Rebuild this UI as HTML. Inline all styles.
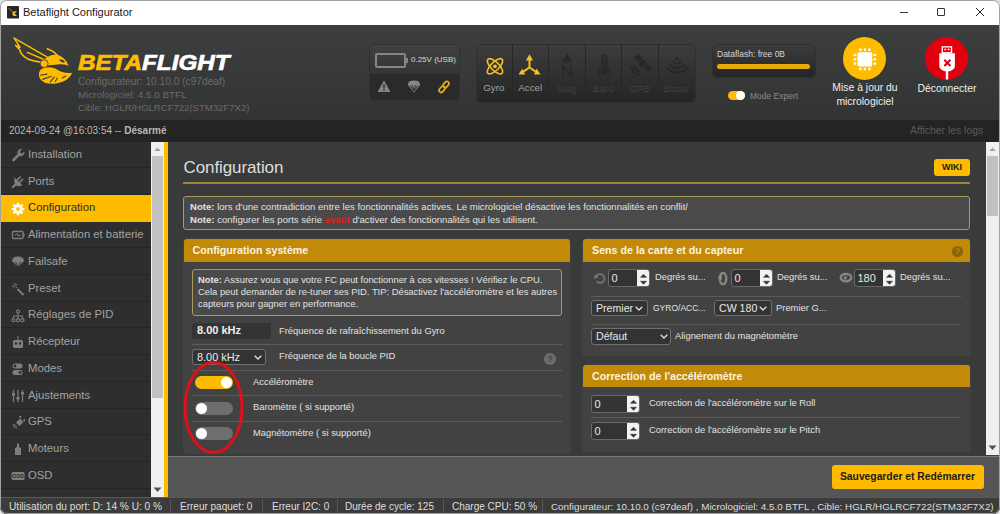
<!DOCTYPE html>
<html><head><meta charset="utf-8">
<style>
*{box-sizing:border-box;margin:0;padding:0}
html,body{width:1000px;height:514px;overflow:hidden;background:#e2e2e2;font-family:"Liberation Sans",sans-serif}
.abs{position:absolute}
#win{position:absolute;left:0;top:0;width:1000px;height:514px;border-radius:7px 7px 7px 7px;overflow:hidden;background:#3c3c3c}
#wborder{position:absolute;left:0;top:0;width:1000px;height:514px;border-radius:7px;border:1px solid #a3a3a3;z-index:50;pointer-events:none}
#titlebar{position:absolute;left:0;top:0;width:1000px;height:25px;background:#fff}
#header{position:absolute;left:0;top:25px;width:1000px;height:94.5px;background:linear-gradient(#3d3e3e,#323333)}
#datebar{position:absolute;left:0;top:119.5px;width:1000px;height:22.5px;background:#242424}
#sidebar{position:absolute;left:1px;top:142px;width:150px;height:355px;background:#2e2e2e;overflow:hidden}
.item{position:absolute;left:0;width:150px;height:26.75px;border-bottom:1px solid #262626;color:#a2a2a2;font-size:11.3px}
.item .t{position:absolute;left:27px;top:6.8px;white-space:nowrap}
.item.active{background:#ffbb00;color:#2c2c2c;border-bottom-color:#ffbb00;height:27.5px}
#sbtrack{position:absolute;left:151px;top:142px;width:13px;height:355px;background:#f0f0f0}
#yline{position:absolute;left:164px;top:142px;width:4px;height:355px;background:#ffbb00}
#content{position:absolute;left:168px;top:142px;width:818px;height:314px;background:#393b3a}
#cscroll{position:absolute;left:986px;top:142px;width:13px;height:313px;background:#f0f0f0}
#footer{position:absolute;left:168px;top:455.5px;width:832px;height:41.5px;background:#555;border-top:1px solid #7a7a7a}
#statusbar{position:absolute;left:0;top:497px;width:1000px;height:17px;background:#3b3b3b;border-top:1px solid #5a5a5a;color:#dedede;font-size:10px}
.sb{position:absolute;top:3px;white-space:nowrap}
.sdiv{position:absolute;top:1px;width:1px;height:14px;background:#585858}

.txt{position:absolute;white-space:nowrap;font-size:9.4px;color:#e2e2e2;line-height:12px}
.note{position:absolute;background:#4a4a4a;border:1px solid #ab9a58;border-radius:3px}
.gbox{position:absolute;background:#424242;border-radius:3px;overflow:hidden;box-shadow:0 0 0 0.5px #4a4a4a}
.ghead{position:absolute;left:0;top:0;width:100%;height:22.5px;background:#c38a08;color:#fbf3e0;font-weight:bold;font-size:10.7px}
.ghead span{position:absolute;left:9px;top:5px;white-space:nowrap}
.sep{position:absolute;height:1px;background:#5c5c5c}
.tog{position:absolute;width:38px;height:13px;border-radius:6.5px;background:#6e6e6e}
.tog.on{background:#ffbb00}
.tog i{position:absolute;top:1px;width:11px;height:11px;border-radius:50%;background:#fff}
.spin{position:absolute;background:#333;border:1px solid #6a6a6a;border-radius:3px;color:#e8e8e8;font-size:12px;overflow:hidden}
.spin .v{position:absolute;left:2.5px;top:2px;font-size:11px}
.spin .sp{position:absolute;right:0;top:0;width:12px;height:100%;background:#f2f2f2}
.sel{position:absolute;background:#333;border:1px solid #707070;border-radius:3px;color:#e8e8e8;font-size:12px}
.sel .v{position:absolute;left:4px;top:1px;white-space:nowrap}
.chev{position:absolute;top:5px;width:8px;height:5px}

.hbox{position:absolute;border-radius:4px;background:linear-gradient(#3c3c3c,#252525);box-shadow:0 0 0 1px #303030}
.cell{position:absolute;top:0;width:36.5px;height:57px;border-right:1px solid #262626}
.cell .lb{position:absolute;left:0;width:100%;top:38px;text-align:center;font-size:9.8px;color:#a0a0a0}
.cell.off .lb{color:#2e2e2e;text-shadow:0 1px 0 #474747}
</style></head><body>
<div id="win">
  <div id="titlebar">
    <svg class="abs" style="left:7px;top:6px" width="12" height="13" viewBox="0 0 12 13"><rect x="0" y="0" width="12" height="12.5" rx="0.8" fill="#272727"/><path d="M1.5 2.2 L6 6" stroke="#b0a020" stroke-width="1" opacity="0.8"/><path d="M9.8 5.8 Q8 4.5 6.2 5.8 Q4.6 7.4 5.8 9.2 Q7.5 10.8 10 9.6 L8.3 8.4 L7.6 7.2 Z" fill="#f0c820"/></svg>
    <div class="abs" style="left:23px;top:6px;font-size:11px;color:#1b1b1b;white-space:nowrap">Betaflight Configurator</div>
    <div class="abs" style="left:900px;top:12px;width:8px;height:1px;background:#333"></div>
    <div class="abs" style="left:937px;top:8px;width:8px;height:8px;border:1px solid #333;border-radius:1px"></div>
    <svg class="abs" style="left:975px;top:7px" width="10" height="10" viewBox="0 0 10 10"><path d="M1 1L9 9M9 1L1 9" stroke="#222" stroke-width="1"/></svg>
  </div>
  <div id="header">
    <svg class="abs" style="left:10px;top:9px" width="66" height="54" viewBox="10 34 66 54">
<g fill="none" stroke="#ffbb00" stroke-width="1.5" stroke-linejoin="round" stroke-linecap="round">
<path d="M14.20 38.20 L19.98 47.45 L15.46 45.34 L19.66 49.76 Q22.61 60.79 42.04 62.15"/>
<path d="M14.20 38.20 L49.92 58.68"/>
<path d="M27.33 52.38 L45.71 60.26"/>
<path d="M47.29 48.71 Q53.07 50.81 56.74 54.48"/>
</g>
<path fill="#ffbb00" d="M45.19 58.68 Q50.97 53.96 57.27 54.48 Q65.67 57.63 68.61 65.72 Q62.52 63.73 55.17 64.67 L46.76 65.51 Z"/>
<ellipse cx="62.00" cy="60.79" rx="2.9" ry="1.2" fill="#3d3d3d" transform="rotate(22 62.00 60.79)"/>
<circle cx="44.14" cy="63.62" r="3.9" fill="#ffbb00" stroke="#3d3d3d" stroke-width="0.8"/>
<path fill="#ffbb00" d="M40.67 69.50 Q46.76 65.51 55.17 68.45 Q64.62 74.44 72.18 72.66 Q69.35 80.74 56.22 83.58 Q44.66 84.95 39.94 78.64 Q37.52 73.92 40.67 69.50 Z"/>
<g stroke="#3d3d3d" stroke-width="1.1" fill="none" stroke-linecap="round">
<path d="M40.46 75.18 L46.97 74.13"/><path d="M42.77 79.38 L51.18 76.23"/><path d="M50.13 82.11 L54.12 77.07"/><path d="M55.38 81.48 L57.27 77.91"/><path d="M62.31 77.91 L65.88 76.02"/>
</g></svg>
    <div class="abs" style="left:78px;top:24.5px;font-size:22px;font-weight:bold;font-style:italic;-webkit-text-stroke:0.7px currentColor;white-space:nowrap;color:#fff;transform:scaleX(1.1);transform-origin:0 0"><span style="color:#ffbb00">BETA</span>FLIGHT</div>
    <div class="abs" style="left:78px;top:51.3px;font-size:10.2px;line-height:12.8px;color:#6b6b6b;white-space:nowrap">Configurateur: 10.10.0 (c97deaf)</div>
    <div class="abs" style="left:78px;top:64.1px;font-size:9.9px;line-height:12.8px;color:#6b6b6b;white-space:nowrap">Micrologiciel: 4.5.0 BTFL</div>
    <div class="abs" style="left:78px;top:76.9px;font-size:9.55px;line-height:12.8px;color:#6b6b6b;white-space:nowrap">Cible: HGLR/HGLRCF722(STM32F7X2)</div>
    <div class="hbox" style="left:369.5px;top:19.5px;width:89.5px;height:55.5px;background:linear-gradient(#404040,#363636 50%,#2a2a2a 54%,#2a2a2a)"></div>
    <div class="abs" style="left:375px;top:28px;width:31px;height:15px;border:2px solid #868686;border-radius:2px"></div>
    <div class="abs" style="left:406px;top:33px;width:2px;height:5px;background:#868686"></div>
    <div class="abs" style="left:411px;top:30px;font-size:8px;color:#d8d8d8;white-space:nowrap">0.25V (USB)</div>
    <svg class="abs" style="left:377px;top:55px" width="14" height="13" viewBox="0 0 14 13"><path d="M7 0.5 L13.5 12 L0.5 12 Z" fill="#868686"/><rect x="6.3" y="4" width="1.4" height="4.5" fill="#2c2c2c"/><rect x="6.3" y="9.3" width="1.4" height="1.4" fill="#2c2c2c"/></svg>
    <svg class="abs" style="left:407px;top:55px" width="14" height="13" viewBox="0 0 14 13"><path d="M0.8 5 Q0.8 0.6 7 0.6 Q13.2 0.6 13.2 5 L7 12.4 Z" fill="#858585"/><path d="M2.8 5.2 L7 11 L11.2 5.2 M5.4 5.3 L7 11 L8.6 5.3" stroke="#2a2a2a" stroke-width="0.9" fill="none"/></svg>
    <svg class="abs" style="left:437px;top:55px" width="14" height="14" viewBox="0 0 14 14"><g fill="none" stroke="#e3ac1c" stroke-width="1.7"><rect x="5.6" y="2.4" width="6.8" height="4.2" rx="2.1" transform="rotate(-50 9 4.5)"/><rect x="1.6" y="7.2" width="6.8" height="4.2" rx="2.1" transform="rotate(-50 5 9.3)"/></g></svg>

    <div class="hbox" style="left:476.5px;top:20px;width:218.5px;height:56.5px"></div>
    <div class="cell" style="left:476px;top:19px"><svg class="abs" style="left:8px;top:11px" width="22" height="22" viewBox="0 0 22 22"><g fill="none" stroke="#f3bd25" stroke-width="1.6"><ellipse cx="11" cy="11.3" rx="10" ry="4.1" transform="rotate(45 11 11.3)"/><ellipse cx="11" cy="11.3" rx="10" ry="4.1" transform="rotate(-45 11 11.3)"/></g><circle cx="11" cy="11.3" r="1.9" fill="#f3bd25"/></svg><div class="lb" style="color:#9ca3ac">Gyro</div></div>
    <div class="cell" style="left:512.5px;top:19px"><svg class="abs" style="left:5.5px;top:9px" width="24" height="23" viewBox="0 0 24 23"><g fill="#f3bd25"><path d="M11.5 14.5 L11.5 6.5 M11.5 14.5 L4.5 19.2 M11.5 14.5 L18.5 19.2" stroke="#f3bd25" stroke-width="2" fill="none"/><path d="M11.5 1.2 L15.1 7.4 L7.9 7.4 Z"/><path d="M0.4 21.4 L4.3 15.7 L7.2 21.4 Z"/><path d="M22.6 21.4 L18.7 15.7 L15.8 21.4 Z"/></g></svg><div class="lb">Accel</div></div>
    <div class="cell off" style="left:549px;top:19px"><svg class="abs" style="left:11px;top:9px" width="14" height="24" viewBox="0 0 14 24"><path d="M7 0.8 L11.5 8 L2.5 8 Z" fill="#272727"/><path d="M2.5 9.5 L11.5 9.5" stroke="#272727" stroke-width="0.8"/><path d="M2.8 23 L2.8 13 L11.2 23 L11.2 13" fill="none" stroke="#272727" stroke-width="1.5"/></svg><div class="lb">Mag</div></div>
    <div class="cell off" style="left:585.5px;top:19px"><svg class="abs" style="left:12px;top:9.5px" width="13" height="23" viewBox="0 0 13 23"><path d="M4.3 13.8 L4.3 2.6 A2.2 2.2 0 0 1 8.7 2.6 L8.7 13.8 A5.6 5.6 0 1 1 4.3 13.8 Z" fill="none" stroke="#272727" stroke-width="1.3"/><circle cx="6.5" cy="17.2" r="3.3" fill="#272727"/><path d="M6.5 3 L6.5 15" stroke="#272727" stroke-width="1.4"/></svg><div class="lb">Baro</div></div>
    <div class="cell off" style="left:622px;top:19px"><svg class="abs" style="left:8px;top:10px" width="23" height="23" viewBox="0 0 23 23"><g fill="#272727"><rect x="5.5" y="1.5" width="6" height="5.2" transform="rotate(45 8.5 4.1)"/><rect x="15" y="11.5" width="6" height="5.2" transform="rotate(45 18 14.1)"/><rect x="9.8" y="6.5" width="5.5" height="6.5" transform="rotate(45 12.5 9.8)"/></g><path d="M1.2 11 A9 9 0 0 0 10.5 20.5 M4.6 11.5 A5.5 5.5 0 0 0 10 17" stroke="#272727" stroke-width="1.8" fill="none"/></svg><div class="lb">GPS</div></div>
    <div class="cell off" style="left:658px;top:19px;border-right:none"><svg class="abs" style="left:7.2px;top:13px" width="24" height="18" viewBox="0 0 24 18"><path d="M16.10 4.70 A5.2 5.2 0 0 1 7.90 4.70 M19.56 7.41 A9.6 9.6 0 0 1 4.44 7.41 M23.03 10.12 A14 14 0 0 1 0.97 10.12" fill="none" stroke="#272727" stroke-width="1.9"/><circle cx="12" cy="1.8" r="1.7" fill="#272727"/></svg><div class="lb">Sonar</div></div>

    <div class="hbox" style="left:712.5px;top:19.5px;width:102.5px;height:32px"></div>
    <div class="abs" style="left:717px;top:24px;font-size:8.5px;color:#d4d4d4;white-space:nowrap">Dataflash: free 0B</div>
    <div class="abs" style="left:717px;top:39px;width:93px;height:5px;border-radius:2.5px;background:#e7a90a"></div>
    <div class="abs" style="left:728px;top:66px;width:17px;height:9px;border-radius:4.5px;background:#ffbb00"></div>
    <div class="abs" style="left:736px;top:66px;width:9px;height:9px;border-radius:50%;background:#fff"></div>
    <div class="abs" style="left:750px;top:66px;font-size:8.5px;color:#8a8a8a;white-space:nowrap">Mode Expert</div>

    <div class="abs" style="left:843px;top:12px;width:43px;height:43px;border-radius:50%;background:#ffbb00"></div>
    <svg class="abs" style="left:850px;top:19px" width="30" height="30" viewBox="0 0 30 30"><g fill="#fff"><rect x="7.6" y="8.2" width="14.6" height="14.2" rx="0.8"/><rect x="9.3" y="4.4" width="2.2" height="2.6"/><rect x="9.3" y="23.7" width="2.2" height="2.6"/><rect x="13.8" y="4.4" width="2.2" height="2.6"/><rect x="13.8" y="23.7" width="2.2" height="2.6"/><rect x="18.3" y="4.4" width="2.2" height="2.6"/><rect x="18.3" y="23.7" width="2.2" height="2.6"/><rect x="3.6" y="9.9" width="2.8" height="2.2"/><rect x="23.4" y="9.9" width="2.8" height="2.2"/><rect x="3.6" y="14.2" width="2.8" height="2.2"/><rect x="23.4" y="14.2" width="2.8" height="2.2"/><rect x="3.6" y="18.5" width="2.8" height="2.2"/><rect x="23.4" y="18.5" width="2.8" height="2.2"/></g></svg>
    <div class="abs" style="left:823px;top:56px;width:84px;text-align:center;font-size:10.4px;line-height:13.5px;color:#f0f0f0">Mise à jour du<br>micrologiciel</div>
    <div class="abs" style="left:925px;top:12px;width:43px;height:43px;border-radius:50%;background:#e2000f"></div>
    <svg class="abs" style="left:936px;top:19px" width="22" height="37" viewBox="0 0 22 37"><g fill="#fff"><rect x="6.25" y="2.85" width="9.3" height="5.9" fill="none" stroke="#fff" stroke-width="1.3"/><rect x="8.3" y="4.7" width="1.9" height="1.5"/><rect x="11.7" y="4.7" width="1.9" height="1.5"/><path d="M3.3 9.2 L18.9 9.2 L18.9 22 Q18.9 25.5 13.5 27.2 L8.7 27.2 Q3.3 25.5 3.3 22 Z"/><rect x="9.8" y="25" width="2.4" height="10.5"/></g><path d="M8.3 15.8 L14.5 22 M14.5 15.8 L8.3 22" stroke="#e2000f" stroke-width="2"/></svg>
    <div class="abs" style="left:905px;top:57.5px;width:84px;text-align:center;font-size:10.4px;color:#f0f0f0">Déconnecter</div>

  </div>
  <div id="datebar">
    <div class="abs" style="left:9px;top:5px;font-size:10px;color:#b9b9b9;white-space:nowrap">2024-09-24 @16:03:54 -- <b>Désarmé</b></div>
    <div class="abs" style="left:910px;top:5px;font-size:10.4px;color:#5a5a5a;white-space:nowrap">Afficher les logs</div>
  </div>
  <div id="sidebar">
<div class="item" style="top:-1.00px"><svg class="ic" width="14" height="14" viewBox="0 0 14 14" style="position:absolute;left:10px;top:7px"><path d="M2.5 12 L8 6.5" stroke="#7e7e7e" stroke-width="2.6" stroke-linecap="round"/><path d="M6.5 5.5 A3.6 3.6 0 0 1 11 1.2 L9 3.4 L9.6 5 L11.2 5.6 L13.3 3.6 A3.6 3.6 0 0 1 8.8 8 Z" fill="#7e7e7e"/></svg><span class="t">Installation</span></div>
<div class="item" style="top:25.75px"><svg class="ic" width="14" height="14" viewBox="0 0 14 14" style="position:absolute;left:10px;top:7px"><path d="M3.6 2.4 L11.2 10 Q8.5 12.2 5.5 10.6 Q2.2 8.2 3.6 2.4 Z" fill="#7e7e7e"/><path d="M4.5 9.5 L1.8 12.2" stroke="#7e7e7e" stroke-width="2.2" stroke-linecap="round"/><path d="M6.6 4.6 L9.2 2 M9 7 L11.6 4.4" stroke="#7e7e7e" stroke-width="1.7" stroke-linecap="round"/></svg><span class="t">Ports</span></div>
<div class="item active" style="top:52.50px"><svg class="ic" width="14" height="14" viewBox="0 0 14 14" style="position:absolute;left:10px;top:7px"><g transform="translate(7 7)" fill="#fff"><circle r="4.4"/><rect x="-1.25" y="-6.3" width="2.5" height="2.6" rx="0.4" transform="rotate(0)"/><rect x="-1.25" y="-6.3" width="2.5" height="2.6" rx="0.4" transform="rotate(45)"/><rect x="-1.25" y="-6.3" width="2.5" height="2.6" rx="0.4" transform="rotate(90)"/><rect x="-1.25" y="-6.3" width="2.5" height="2.6" rx="0.4" transform="rotate(135)"/><rect x="-1.25" y="-6.3" width="2.5" height="2.6" rx="0.4" transform="rotate(180)"/><rect x="-1.25" y="-6.3" width="2.5" height="2.6" rx="0.4" transform="rotate(225)"/><rect x="-1.25" y="-6.3" width="2.5" height="2.6" rx="0.4" transform="rotate(270)"/><rect x="-1.25" y="-6.3" width="2.5" height="2.6" rx="0.4" transform="rotate(315)"/><circle r="1.9" fill="#ffbb00"/></g></svg><span class="t">Configuration</span></div>
<div class="item" style="top:79.25px"><svg class="ic" width="14" height="14" viewBox="0 0 14 14" style="position:absolute;left:10px;top:7px"><rect x="1.5" y="3.5" width="10.5" height="7" rx="1" fill="none" stroke="#7e7e7e" stroke-width="1.3"/><rect x="12" y="5.5" width="1.5" height="3" fill="#7e7e7e"/><path d="M3.5 7 L5.5 7 L6.5 5.3 L7.6 8.6 L8.5 7 L10 7" fill="none" stroke="#7e7e7e" stroke-width="0.9"/></svg><span class="t">Alimentation et batterie</span></div>
<div class="item" style="top:106.00px"><svg class="ic" width="14" height="14" viewBox="0 0 14 14" style="position:absolute;left:10px;top:7px"><path d="M1 6.5 Q1 1.5 7 1.5 Q13 1.5 13 6.5 L7 12.5 Z" fill="#7e7e7e"/><path d="M1.2 6.5 L7 12.5 L12.8 6.5 M4.5 6.7 L7 12.5 L9.5 6.7" stroke="#2e2e2e" stroke-width="0.9" fill="none"/></svg><span class="t">Failsafe</span></div>
<div class="item" style="top:132.75px"><svg class="ic" width="14" height="14" viewBox="0 0 14 14" style="position:absolute;left:10px;top:7px"><path d="M6.5 7 L12.5 13" stroke="#7e7e7e" stroke-width="2"/><path d="M4 1 L4 3.5 M1 4 L3.5 4 M6.5 2 L5.2 3.3 M2 6.5 L3.3 5.2 M4.5 4.5 L6 6" stroke="#7e7e7e" stroke-width="1"/></svg><span class="t">Preset</span></div>
<div class="item" style="top:159.50px"><svg class="ic" width="14" height="14" viewBox="0 0 14 14" style="position:absolute;left:10px;top:7px"><circle cx="7" cy="2.5" r="1.5" fill="none" stroke="#7e7e7e" stroke-width="1.1"/><path d="M7 4 L7 7 M2.5 9.5 L2.5 7 L11.5 7 L11.5 9.5 M7 7 L7 9.5" stroke="#7e7e7e" stroke-width="1.1" fill="none"/><circle cx="2.5" cy="11.2" r="1.6" fill="none" stroke="#7e7e7e" stroke-width="1.1"/><circle cx="7" cy="11.2" r="1.6" fill="none" stroke="#7e7e7e" stroke-width="1.1"/><circle cx="11.5" cy="11.2" r="1.6" fill="none" stroke="#7e7e7e" stroke-width="1.1"/></svg><span class="t">Réglages de PID</span></div>
<div class="item" style="top:186.25px"><svg class="ic" width="14" height="14" viewBox="0 0 14 14" style="position:absolute;left:10px;top:7px"><path d="M7 1 L7 5" stroke="#7e7e7e" stroke-width="1"/><rect x="2" y="5" width="10" height="8" rx="1.5" fill="#7e7e7e"/><circle cx="5" cy="8.5" r="1.2" fill="#2e2e2e"/><circle cx="9" cy="8.5" r="1.2" fill="#2e2e2e"/></svg><span class="t">Récepteur</span></div>
<div class="item" style="top:213.00px"><svg class="ic" width="14" height="14" viewBox="0 0 14 14" style="position:absolute;left:10px;top:7px"><rect x="1.5" y="1.5" width="10" height="5" rx="2.5" fill="#7e7e7e"/><rect x="1.5" y="8" width="10" height="5" rx="2.5" fill="#7e7e7e"/><circle cx="4" cy="4" r="1.4" fill="#2e2e2e"/><circle cx="9" cy="10.5" r="1.4" fill="#2e2e2e"/></svg><span class="t">Modes</span></div>
<div class="item" style="top:239.75px"><svg class="ic" width="14" height="14" viewBox="0 0 14 14" style="position:absolute;left:10px;top:7px"><path d="M2.5 1 L2.5 13 M7 1 L7 13 M11.5 1 L11.5 13" stroke="#7e7e7e" stroke-width="1.2"/><rect x="1" y="4" width="3" height="2.5" fill="#7e7e7e"/><rect x="5.5" y="8" width="3" height="2.5" fill="#7e7e7e"/><rect x="10" y="3" width="3" height="2.5" fill="#7e7e7e"/></svg><span class="t">Ajustements</span></div>
<div class="item" style="top:266.50px"><svg class="ic" width="14" height="14" viewBox="0 0 14 14" style="position:absolute;left:10px;top:7px"><path d="M5 6.5 L9 2.5 L12.5 6 L8.5 10 Z" fill="#7e7e7e"/><path d="M8.5 1.5 L10 0 M12.5 5 L14 3.5" stroke="#7e7e7e" stroke-width="2"/><path d="M2 8 A4 4 0 0 0 6 12 M3.8 8.3 A2.2 2.2 0 0 0 5.7 10.2" stroke="#7e7e7e" stroke-width="1" fill="none"/></svg><span class="t">GPS</span></div>
<div class="item" style="top:293.25px"><svg class="ic" width="14" height="14" viewBox="0 0 14 14" style="position:absolute;left:10px;top:7px"><path d="M6 1.5 L8 1.5 L8 5 L10 6 L10 13 L4 13 L4 6 L6 5 Z" fill="#7e7e7e"/></svg><span class="t">Moteurs</span></div>
<div class="item" style="top:320.00px"><svg class="ic" width="14" height="14" viewBox="0 0 14 14" style="position:absolute;left:10px;top:7px"><rect x="0.5" y="3" width="13" height="8" rx="1.5" fill="#7e7e7e"/><text x="7" y="9.3" font-size="5.5" text-anchor="middle" fill="#2e2e2e" font-family="Liberation Sans" font-weight="bold">OSD</text></svg><span class="t">OSD</span></div>
<div class="item" style="top:346.75px"><svg class="ic" width="14" height="14" viewBox="0 0 14 14" style="position:absolute;left:10px;top:7px"><rect x="2" y="2" width="10" height="10" fill="#7e7e7e"/></svg><span class="t">Blackbox</span></div>
</div>
  <div id="sbtrack"><div class="abs" style="left:1px;top:14px;width:11px;height:242px;background:#c1c1c1"></div><svg class="abs" style="left:2px;top:4px" width="9" height="6"><path d="M1.2 5 L4.5 1.4 L7.8 5 Z" fill="#a3a3a3"/></svg><svg class="abs" style="left:2px;top:345px" width="9" height="6"><path d="M0.5 0.5 L4.5 5 L8.5 0.5 Z" fill="#505050"/></svg></div>
  <div id="yline"></div>
  <div id="content"></div>
  <div class="txt" style="left:183.5px;top:158px;font-size:17px;letter-spacing:-0.1px;line-height:20px;color:#dedede">Configuration</div>
  <div class="abs" style="left:934px;top:159px;width:36px;height:16.5px;background:#ffbb00;border-radius:3px"><span class="abs" style="left:8px;top:3px;font-size:9px;font-weight:bold;color:#1e1e1e">WIKI</span></div>
  <div class="abs" style="left:183px;top:182px;width:787px;height:2px;background:#9f8637"></div>
  <div class="note" style="left:183px;top:196px;width:787px;height:34px"></div>
  <div class="txt" style="left:190px;top:201.2px;line-height:12.4px;font-size:9.58px"><b>Note:</b> lors d'une contradiction entre les fonctionnalités actives. Le micrologiciel désactive les fonctionnalités en conflit/<br><b>Note:</b> configurer les ports série <b style="color:#e21a1a">avant</b> d'activer des fonctionnalités qui les utilisent.</div>

  <div class="gbox" style="left:183.5px;top:239px;width:386.5px;height:214px"><div class="ghead"><span>Configuration système</span></div></div>
  <div class="note" style="left:192px;top:269px;width:370px;height:47px"></div>
  <div class="txt" style="left:198px;top:274px;line-height:12px"><b>Note:</b> Assurez vous que votre FC peut fonctionner à ces vitesses ! Vérifiez le CPU.<br>Cela peut demander de re-tuner ses PID. TIP: Désactivez l'accéléromètre et les autres<br>capteurs pour gagner en performance.</div>
  <div class="abs" style="left:192px;top:323px;width:79px;height:16px;background:#343434;border-radius:3px"><span class="abs" style="left:5px;top:1px;font-size:11px;font-weight:bold;color:#f0f0f0;white-space:nowrap">8.00 kHz</span></div>
  <div class="txt" style="left:279px;top:325px">Fréquence de rafraîchissement du Gyro</div>
  <div class="sep" style="left:192px;top:344px;width:370px"></div>
  <div class="sel" style="left:192px;top:349px;width:74px;height:16px"><span class="v" style="font-size:10.9px">8.00 kHz</span><svg class="chev" style="left:61px" viewBox="0 0 8 5"><path d="M0.7 0.7 L4 4 L7.3 0.7" fill="none" stroke="#e0e0e0" stroke-width="1.3"/></svg></div>
  <div class="txt" style="left:279px;top:350px">Fréquence de la boucle PID</div>
  <div class="abs" style="left:544px;top:353px;width:12px;height:12px;border-radius:50%;background:#6c6c6c;color:#3f3f3f;font-size:9px;font-weight:bold;text-align:center;line-height:12px">?</div>
  <div class="sep" style="left:192px;top:370px;width:370px"></div>
  <div class="tog on" style="left:195px;top:376px"><i style="left:26px"></i></div>
  <div class="txt" style="left:253px;top:376px">Accéléromètre</div>
  <div class="sep" style="left:192px;top:395px;width:370px"></div>
  <div class="tog" style="left:195px;top:401.5px"><i style="left:1px"></i></div>
  <div class="txt" style="left:253px;top:401px">Baromètre ( si supporté)</div>
  <div class="sep" style="left:192px;top:420.5px;width:370px"></div>
  <div class="tog" style="left:195px;top:427px"><i style="left:1px"></i></div>
  <div class="txt" style="left:253px;top:427px">Magnétomètre ( si supporté)</div>

  <div class="gbox" style="left:583px;top:239px;width:387px;height:116px"><div class="ghead"><span>Sens de la carte et du capteur</span></div></div>
  <div class="abs" style="left:952px;top:246px;width:11px;height:11px;border-radius:50%;background:#8a6508;color:#bf870a;font-size:8.5px;font-weight:bold;text-align:center;line-height:11px">?</div>
  
  <svg class="abs" style="left:593px;top:272px" width="14" height="14" viewBox="0 0 14 14"><path d="M3.2 4.3 A4.4 4.4 0 1 1 3.6 9.3" fill="none" stroke="#787878" stroke-width="1.7"/><path d="M0.8 6.8 L2.2 2.6 L5.4 5.4 Z" fill="#787878"/></svg>
  <svg class="abs" style="left:717px;top:271px" width="12" height="15" viewBox="0 0 12 15"><ellipse cx="6" cy="7.6" rx="3.3" ry="5.6" fill="none" stroke="#858585" stroke-width="2.4"/><path d="M1 6.5 L4.5 3.5 L4.8 9 Z" fill="#8e8e8e"/></svg>
  <svg class="abs" style="left:839px;top:272px" width="14" height="12" viewBox="0 0 14 12"><ellipse cx="7" cy="5.6" rx="5.3" ry="3.6" fill="none" stroke="#858585" stroke-width="2.4"/><path d="M4.5 5 L8.5 4.5 L6 8.5 Z" fill="#8e8e8e"/></svg>
  <div class="spin" style="left:608px;top:269px;width:42px;height:18px"><span class="v">0</span><span class="sp"><svg class="abs" style="left:2.5px;top:3.5px" width="7" height="11" viewBox="0 0 7 11"><path d="M0.5 3.2 L3.5 0.3 L6.5 3.2 Z M0.5 7.3 L3.5 10.2 L6.5 7.3 Z" fill="#333" stroke="#333" stroke-width="0.6" stroke-linejoin="round"/></svg></span></div>
  <div class="txt" style="left:655px;top:271px">Degrés su...</div>
  <div class="spin" style="left:731px;top:269px;width:42px;height:18px"><span class="v">0</span><span class="sp"><svg class="abs" style="left:2.5px;top:3.5px" width="7" height="11" viewBox="0 0 7 11"><path d="M0.5 3.2 L3.5 0.3 L6.5 3.2 Z M0.5 7.3 L3.5 10.2 L6.5 7.3 Z" fill="#333" stroke="#333" stroke-width="0.6" stroke-linejoin="round"/></svg></span></div>
  <div class="txt" style="left:777px;top:271px">Degrés su...</div>
  <div class="spin" style="left:854px;top:269px;width:42px;height:18px"><span class="v">180</span><span class="sp"><svg class="abs" style="left:2.5px;top:3.5px" width="7" height="11" viewBox="0 0 7 11"><path d="M0.5 3.2 L3.5 0.3 L6.5 3.2 Z M0.5 7.3 L3.5 10.2 L6.5 7.3 Z" fill="#333" stroke="#333" stroke-width="0.6" stroke-linejoin="round"/></svg></span></div>
  <div class="txt" style="left:900px;top:271px">Degrés su...</div>
  <div class="sep" style="left:591px;top:296px;width:370px"></div>
  <div class="sel" style="left:591px;top:300px;width:57px;height:16px"><span class="v" style="font-size:10.6px">Premier</span><svg class="chev" style="left:43px" viewBox="0 0 8 5"><path d="M0.7 0.7 L4 4 L7.3 0.7" fill="none" stroke="#e0e0e0" stroke-width="1.3"/></svg></div>
  <div class="txt" style="left:653px;top:302px;font-size:8.5px">GYRO/ACC...</div>
  <div class="sel" style="left:714px;top:300px;width:58px;height:16px"><span class="v" style="font-size:10.6px">CW 180</span><svg class="chev" style="left:44px" viewBox="0 0 8 5"><path d="M0.7 0.7 L4 4 L7.3 0.7" fill="none" stroke="#e0e0e0" stroke-width="1.3"/></svg></div>
  <div class="txt" style="left:776px;top:302px">Premier G...</div>
  <div class="sep" style="left:591px;top:324px;width:370px"></div>
  <div class="sel" style="left:591px;top:328px;width:80px;height:16.5px"><span class="v" style="font-size:10.6px">Défaut</span><svg class="chev" style="left:68px" viewBox="0 0 8 5"><path d="M0.7 0.7 L4 4 L7.3 0.7" fill="none" stroke="#e0e0e0" stroke-width="1.3"/></svg></div>
  <div class="txt" style="left:675px;top:330px">Alignement du magnétomètre</div>

  <div class="gbox" style="left:583px;top:364.5px;width:387px;height:86px"><div class="ghead"><span>Correction de l'accéléromètre</span></div></div>
  <div class="spin" style="left:591px;top:395px;width:49px;height:18px"><span class="v">0</span><span class="sp"><svg class="abs" style="left:2.5px;top:3.5px" width="7" height="11" viewBox="0 0 7 11"><path d="M0.5 3.2 L3.5 0.3 L6.5 3.2 Z M0.5 7.3 L3.5 10.2 L6.5 7.3 Z" fill="#333" stroke="#333" stroke-width="0.6" stroke-linejoin="round"/></svg></span></div>
  <div class="txt" style="left:649px;top:397px">Correction de l'accéléromètre sur le Roll</div>
  <div class="sep" style="left:591px;top:416.5px;width:370px"></div>
  <div class="spin" style="left:591px;top:422px;width:49px;height:18px"><span class="v">0</span><span class="sp"><svg class="abs" style="left:2.5px;top:3.5px" width="7" height="11" viewBox="0 0 7 11"><path d="M0.5 3.2 L3.5 0.3 L6.5 3.2 Z M0.5 7.3 L3.5 10.2 L6.5 7.3 Z" fill="#333" stroke="#333" stroke-width="0.6" stroke-linejoin="round"/></svg></span></div>
  <div class="txt" style="left:649px;top:424px">Correction de l'accéléromètre sur le Pitch</div>
  <svg class="abs" style="left:183px;top:360px" width="62" height="96" viewBox="0 0 62 96"><ellipse cx="30.5" cy="47.5" rx="28.5" ry="45" fill="none" stroke="#e0101a" stroke-width="3"/></svg>
  <div id="cscroll"><div class="abs" style="left:1px;top:14px;width:11px;height:60px;background:#c1c1c1"></div><svg class="abs" style="left:2px;top:4px" width="9" height="6"><path d="M1.2 5 L4.5 1.4 L7.8 5 Z" fill="#a3a3a3"/></svg><svg class="abs" style="left:2px;top:303px" width="9" height="6"><path d="M0.5 0.5 L4.5 5 L8.5 0.5 Z" fill="#505050"/></svg></div>
  <div id="footer">
    <div class="abs" style="left:664px;top:8.5px;width:152px;height:23.5px;background:#ffbb00;border-radius:3px"><span class="abs" style="left:8px;top:6px;font-size:10.3px;font-weight:bold;color:#1c1c1c;white-space:nowrap">Sauvegarder et Redémarrer</span></div>
  </div>
  <div id="statusbar">
    <span class="sb" style="left:9px;font-size:10.15px">Utilisation du port: D: 14 % U: 0 %</span><i class="sdiv" style="left:170px"></i>
    <span class="sb" style="left:180px">Erreur paquet: 0</span><i class="sdiv" style="left:262px"></i>
    <span class="sb" style="left:272px">Erreur I2C: 0</span><i class="sdiv" style="left:337px"></i>
    <span class="sb" style="left:345px">Durée de cycle: 125</span><i class="sdiv" style="left:443px"></i>
    <span class="sb" style="left:452px">Charge CPU: 50 %</span><i class="sdiv" style="left:542px"></i>
    <span class="sb" style="left:551px;font-size:9.83px">Configurateur: 10.10.0 (c97deaf) , Micrologiciel: 4.5.0 BTFL , Cible: HGLR/HGLRCF722(STM32F7X2)</span>
  </div>
  <div id="wborder"></div>
</div>
</body></html>
